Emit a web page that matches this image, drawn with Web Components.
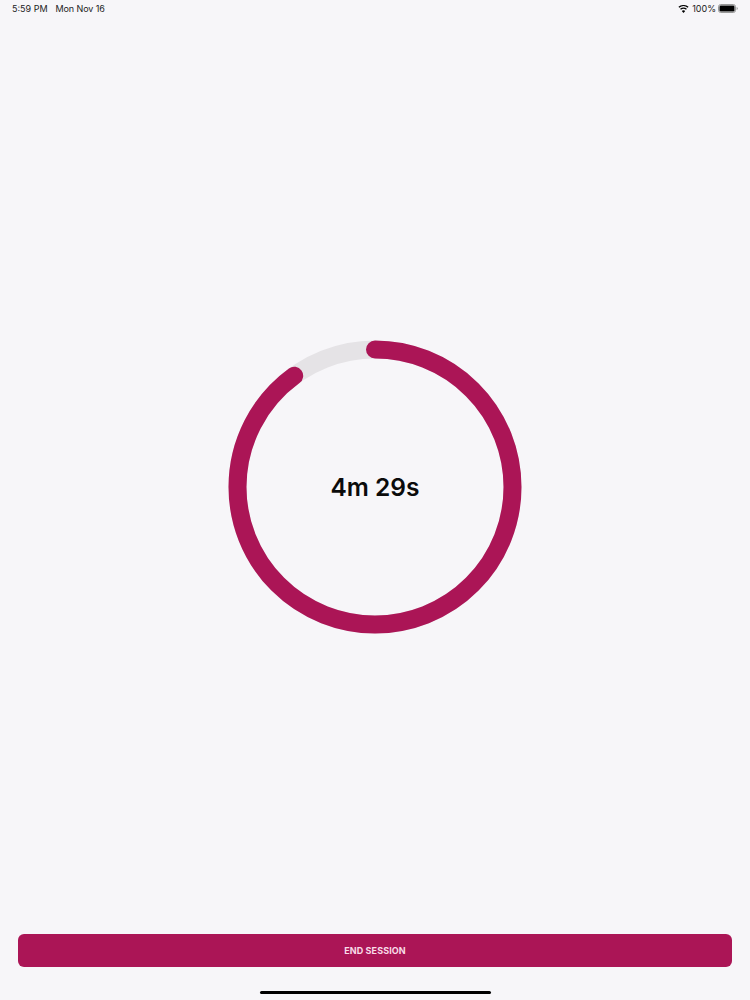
<!DOCTYPE html>
<html>
<head>
<meta charset="utf-8">
<title>Session</title>
<style>
html, body { margin: 0; height: 100%; background: #f7f6f9; }
body { font-family: "Inter", "Liberation Sans", sans-serif; }
</style>
</head>
<body>
<session-screen>
    <status-bar slot="top" time="5:59 PM" date="Mon Nov 16" battery="100%"></status-bar>
    <timer-ring progress="0.9" label="4m 29s"></timer-ring>
    <end-button slot="bottom">END SESSION</end-button>
</session-screen>
<script>
class SessionScreen extends HTMLElement {
    constructor() {
        super();
        this.attachShadow({mode: 'open'});
        this.shadowRoot.innerHTML = `
            <style>
                :host { display: flex; flex-direction: column; height: 1000px; box-sizing: border-box; }
                main { flex: 1; display: flex; align-items: center; justify-content: center; padding-top: 22px; }
                footer { padding: 0 18px; }
                .home { height: 3px; width: 231px; border-radius: 2px; background: #000; margin: 24px auto 6px; }
            </style>
            <slot name="top"></slot>
            <main><slot></slot></main>
            <footer><slot name="bottom"></slot></footer>
            <div class="home"></div>
        `;
    }
}

class StatusBar extends HTMLElement {
    constructor() {
        super();
        this.attachShadow({mode: 'open'});
    }

    connectedCallback() {
        this.shadowRoot.innerHTML = `
            <style>
                :host { display: flex; justify-content: space-between; align-items: flex-start; height: 18px; padding: 3px 12px 0; box-sizing: border-box; font-size: 9px; line-height: 11px; color: #222; }
                div { display: flex; align-items: center; gap: 8px; }
                .right { gap: 3px; }
                .date { letter-spacing: -.1px; }
                .battery { margin-left: -1px; }
                svg { display: block; }
            </style>
            <div><span>${this.getAttribute('time')}</span><span class="date">${this.getAttribute('date')}</span></div>
            <div class="right">
                <svg width="11" height="8" viewBox="0 0 22 16">
                    <path d="M11 16l-3.4-4.2a5.4 5.4 0 0 1 6.8 0z" fill="#000"/>
                    <path d="M5.9 9.7a8 8 0 0 1 10.2 0l1.7-2.1a10.8 10.8 0 0 0-13.6 0z" fill="#000"/>
                    <path d="M2.6 5.6a13.4 13.4 0 0 1 16.8 0l1.7-2.1a16.1 16.1 0 0 0-20.2 0z" fill="#000"/>
                </svg>
                <span>${this.getAttribute('battery')}</span>
                <svg class="battery" width="20" height="9" viewBox="0 0 20 9">
                    <rect x=".5" y=".5" width="17" height="8" rx="2.2" fill="none" stroke="#999"/>
                    <rect x="1.5" y="1.5" width="15" height="6" rx="1.2" fill="#000"/>
                    <path d="M18.6 3v3c.7-.2 1.2-.8 1.2-1.5s-.5-1.3-1.2-1.5z" fill="#999"/>
                </svg>
            </div>
        `;
    }
}

class TimerRing extends HTMLElement {
    constructor() {
        super();
        this.attachShadow({mode: 'open'});
    }

    connectedCallback() {
        const p = parseFloat(this.getAttribute('progress'));
        this.shadowRoot.innerHTML = `
            <style>
                :host { display: grid; place-items: center; width: 294px; height: 294px; }
                svg, b { grid-area: 1 / 1; }
                b { font-size: 24.5px; font-weight: 600; color: #0b0b0b; }
            </style>
            <svg width="294" height="294" viewBox="0 0 294 294">
                <circle cx="147" cy="147" r="137.5" fill="none" stroke="#e5e3e6" stroke-width="18"/>
                <circle cx="147" cy="147" r="137.5" fill="none" stroke="#ab1556" stroke-width="18"
                    stroke-linecap="round" pathLength="100" stroke-dasharray="${p * 100} 100"
                    transform="rotate(-90 147 147)"/>
            </svg>
            <b>${this.getAttribute('label')}</b>
        `;
    }
}

class EndButton extends HTMLElement {
    constructor() {
        super();
        this.attachShadow({mode: 'open'});
        this.shadowRoot.innerHTML = `
            <style>
                :host { display: flex; align-items: center; justify-content: center; height: 33px; border-radius: 6px; background: #ab1556; color: #f8dce8; font-size: 9px; font-weight: 700; letter-spacing: .1px; }
            </style>
            <slot></slot>
        `;
    }
}

customElements.define('session-screen', SessionScreen);
customElements.define('status-bar', StatusBar);
customElements.define('timer-ring', TimerRing);
customElements.define('end-button', EndButton);
</script>
</body>
</html>
